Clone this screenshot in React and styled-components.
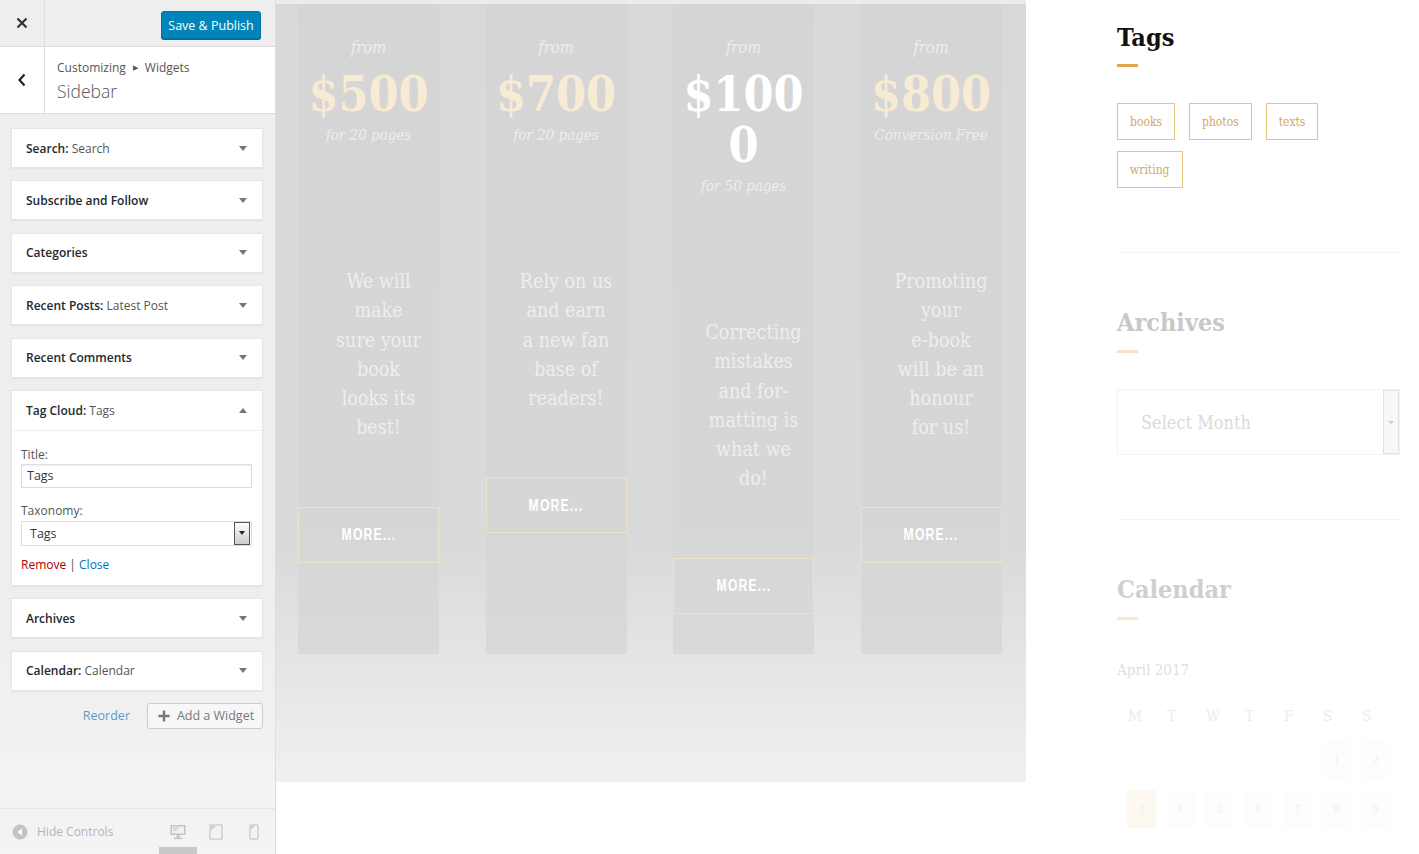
import React from 'react';
import styled, { createGlobalStyle } from 'styled-components';

const ADMIN = `"Open Sans", "Noto Sans", sans-serif`;
const SERIF = `"DejaVu Serif Condensed", "DejaVu Serif", serif`;
const CONDENSED = `"Liberation Sans", Arial, sans-serif`;

const GlobalStyle = createGlobalStyle`
  html, body {
    margin: 0;
    padding: 0;
    height: 100%;
    overflow: hidden;
    background: #fff;
  }
  #root {
    height: 100%;
  }
  * {
    box-sizing: border-box;
  }
`;

const Page = styled.div`
  display: flex;
  width: 1419px;
  height: 854px;
`;

// customizer panel on the left
const Controls = styled.div`
  width: 276px;
  flex-shrink: 0;
  display: flex;
  flex-direction: column;
  border-right: 1px solid #ddd;
  background: linear-gradient(#eee 0%, #eee 70%, #f4f4f4 100%);
  font-family: ${ADMIN};
`;

const TopBar = styled.div`
  height: 47px;
  display: flex;
  align-items: center;
  justify-content: space-between;
  border-bottom: 1px solid #ddd;
`;

const IconCell = styled.div`
  width: ${p => p.$w || 45}px;
  height: 100%;
  display: flex;
  align-items: center;
  justify-content: center;
  border-right: 1px solid #ddd;
  color: #444;
`;

const SaveButton = styled.button`
  margin: 4px 14px 0 0;
  width: 100px;
  height: 28px;
  padding: 0;
  background: #0085ba;
  border: 1px solid #0073aa;
  border-radius: 3px;
  box-shadow: 0 1px 0 #006799;
  color: #fff;
  font-family: ${ADMIN};
  font-size: 12.5px;
`;

const SectionHead = styled.div`
  height: 67px;
  display: flex;
  background: #fff;
  border-bottom: 1px solid #ddd;
`;

const HeadTitles = styled.div`
  display: flex;
  flex-direction: column;
  justify-content: center;
  padding: 4px 0 0 12px;
  color: #555;
`;

const Crumb = styled.div`
  font-size: 12px;
  line-height: 18px;
  display: flex;
  align-items: center;
  gap: 7px;
`;

const CrumbArrow = styled.span`
  font-size: 7px;
`;

const SectionTitle = styled.div`
  font-size: 17.5px;
  font-weight: 300;
  line-height: 28px;
  color: #555;
`;

const WidgetList = styled.div`
  display: flex;
  flex-direction: column;
  gap: 12.4px;
  padding: 14px 12px 0 11px;
`;

const Widget = styled.div`
  background: #fff;
  border: 1px solid #e5e5e5;
  box-shadow: 0 1px 1px rgba(0, 0, 0, 0.04);
`;

const WidgetHead = styled.div`
  height: ${p => (p.$open ? 40 : 38)}px;
  display: flex;
  align-items: center;
  justify-content: space-between;
  padding: 0 15px 0 14px;
  font-size: 12px;
  font-weight: 600;
  color: #23282d;
  border-bottom: ${p => (p.$open ? '1px solid #eee' : 'none')};
`;

const WidgetSub = styled.span`
  font-weight: 400;
  color: #555;
`;

const Caret = styled.span`
  width: 0;
  height: 0;
  border-left: 4px solid transparent;
  border-right: 4px solid transparent;
  ${p => (p.$up ? 'border-bottom: 5px solid #777;' : 'border-top: 5px solid #777;')}
`;

const WidgetBody = styled.div`
  padding: 15px 10px 11px 9px;
  display: flex;
  flex-direction: column;
`;

const FieldLabel = styled.div`
  font-size: 12px;
  line-height: 18px;
  color: #555;
  margin-top: ${p => p.$gap || 0}px;
`;

const TextField = styled.input`
  width: 100%;
  height: 24px;
  border: 1px solid #ddd;
  box-shadow: inset 0 1px 2px rgba(0, 0, 0, 0.07);
  padding: 0 5px;
  font-family: ${ADMIN};
  font-size: 12.5px;
  color: #32373c;
  outline: none;
`;

const SelectField = styled.div`
  margin-top: 1px;
  height: 25px;
  display: flex;
  align-items: center;
  justify-content: space-between;
  border: 1px solid #ddd;
  padding-left: 8px;
  font-size: 12.5px;
  color: #32373c;
`;

const ClassicArrow = styled.div`
  width: 16px;
  height: 23px;
  margin-right: 1px;
  border: 1px solid #555;
  background: linear-gradient(#fdfdfd, #ccc);
  display: flex;
  align-items: center;
  justify-content: center;
  &::after {
    content: '';
    border-left: 3px solid transparent;
    border-right: 3px solid transparent;
    border-top: 4px solid #222;
  }
`;

const LinkRow = styled.div`
  margin-top: 10px;
  font-size: 12px;
  line-height: 18px;
  color: #555;
`;

const TextLink = styled.span`
  color: ${p => p.$color || '#0073aa'};
  font-size: ${p => p.$size || 12}px;
`;

const Actions = styled.div`
  display: flex;
  justify-content: flex-end;
  align-items: center;
  gap: 17px;
  padding: 12px 12px 0 0;
`;

const AddWidget = styled.button`
  width: 116px;
  height: 26px;
  display: flex;
  align-items: center;
  justify-content: center;
  gap: 7px;
  padding: 0 0 0 2px;
  background: #f7f7f7;
  border: 1px solid #ccc;
  border-radius: 3px;
  color: #777;
  font-family: ${ADMIN};
  font-size: 12.5px;
`;

const Footer = styled.div`
  margin-top: auto;
  height: 46px;
  display: flex;
  align-items: center;
  border-top: 1px solid #e6e6e6;
  padding-left: 12px;
`;

const HideControls = styled.div`
  display: flex;
  align-items: center;
  gap: 9px;
  color: #b4b4b4;
  font-size: 12px;
`;

const Devices = styled.div`
  margin-left: auto;
  display: flex;
  height: 100%;
  padding-right: 2px;
`;

const DeviceBtn = styled.div`
  width: 38px;
  height: 100%;
  display: flex;
  align-items: center;
  justify-content: center;
  padding-top: 1px;
  box-shadow: ${p => (p.$active ? 'inset 0 -7px 0 #c9c9c9' : 'none')};
`;

// preview side
const Preview = styled.div`
  flex: 1;
  display: flex;
  background: #fff;
`;

const PricingWrap = styled.div`
  width: 750px;
  flex-shrink: 0;
  display: flex;
  flex-direction: column;
`;

const TopStrip = styled.div`
  height: 4px;
  background: #ececec;
`;

const Pricing = styled.div`
  height: 778px;
  display: flex;
  align-items: flex-start;
  gap: 46.5px;
  padding-left: 22px;
  background: linear-gradient(#d9d9d9 0%, #dadada 70%, #e6e6e6 86%, #f0f0f0 100%);
  font-family: ${SERIF};
`;

const PriceCol = styled.div`
  width: 141px;
  height: 650px;
  display: flex;
  flex-direction: column;
  align-items: center;
  padding-top: 34px;
  background: linear-gradient(#d5d5d5 0%, #d6d6d6 80%, #d9d9d9 100%);
`;

const FromText = styled.div`
  font-style: italic;
  font-size: ${p => p.$size || 15}px;
  line-height: 20px;
  color: #ededed;
  text-align: center;
  margin-top: ${p => p.$gap || 0}px;
`;

const Price = styled.div`
  margin-top: 11px;
  font-size: 48px;
  font-weight: 700;
  line-height: 51px;
  text-align: center;
  color: ${p => (p.$white ? '#fff' : '#f8ebd3')};
`;

const Desc = styled.div`
  width: 100%;
  margin-top: 122px;
  padding-left: 20px;
  font-size: 19.5px;
  line-height: 29.3px;
  color: #eeeeee;
  text-align: center;
  white-space: nowrap;
`;

const MoreButton = styled.div`
  margin-top: 64px;
  width: 141px;
  height: 56px;
  display: flex;
  align-items: center;
  justify-content: center;
  border: 1px solid #eee3c5;
  padding-top: 1px;
`;

// narrow display face: condensed by scaling the glyphs horizontally
const MoreLabel = styled.span`
  display: inline-block;
  color: #fff;
  font-family: ${CONDENSED};
  font-size: 16px;
  font-weight: 700;
  letter-spacing: 1.5px;
  transform: scaleX(0.76);
`;

const Sidebar = styled.div`
  width: 283px;
  margin-left: 91px;
  padding-top: 23px;
  font-family: ${SERIF};
`;

const WidgetTitle = styled.div`
  font-size: 25px;
  font-weight: 700;
  line-height: 30px;
  color: ${p => p.$color || '#111'};
  margin-top: ${p => p.$gap || 0}px;
`;

const Underline = styled.div`
  width: 21px;
  height: 3px;
  margin-top: ${p => p.$gap || 11}px;
  background: ${p => p.$color || '#e0a84e'};
`;

const TagList = styled.div`
  margin-top: 36px;
  display: flex;
  flex-wrap: wrap;
  gap: 11px 14px;
  width: 220px;
`;

const Tag = styled.div`
  height: 37px;
  display: flex;
  align-items: center;
  padding: 0 12px;
  border: 1px solid #e4c77c;
  color: #d2a85f;
  font-size: 12px;
`;

const Divider = styled.div`
  height: 1px;
  margin-top: ${p => p.$gap}px;
  background: #f4f4f4;
`;

const MonthSelect = styled.div`
  margin-top: 36px;
  height: 66px;
  display: flex;
  align-items: center;
  justify-content: space-between;
  border: 1px solid #f3f3f3;
  padding-left: 23px;
  font-size: 18px;
  color: #dadada;
`;

const SelectKnob = styled.div`
  width: 16px;
  height: 100%;
  border: 1px solid #e2e2e2;
  background: #f8f8f8;
  display: flex;
  align-items: center;
  justify-content: center;
  &::after {
    content: '';
    border-left: 3px solid transparent;
    border-right: 3px solid transparent;
    border-top: 3px solid #ccc;
  }
`;

const MonthLabel = styled.div`
  margin-top: 40px;
  font-size: 15px;
  line-height: 20px;
  color: #dedede;
`;

const CalGrid = styled.div`
  margin: 26px 0 0 5px;
  display: grid;
  grid-template-columns: repeat(7, 39px);
`;

const CalHead = styled.div`
  height: 20px;
  line-height: 20px;
  font-size: 15px;
  color: #ececec;
  padding-left: 6px;
`;

const CalDay = styled.div`
  height: 38px;
  margin: ${p => (p.$first ? '15px' : '11px')} 5px 0;
  display: flex;
  align-items: center;
  justify-content: center;
  font-size: 11px;
  color: #f0f0f0;
  background: ${p => (p.$today ? '#fdf8f0' : p.$filled ? '#fdfdfd' : 'transparent')};
`;

const columns = [
  { price: ['$500'], sub: 'for 20 pages', desc: ['We will', 'make', 'sure your', 'book', 'looks its', 'best!'] },
  { price: ['$700'], sub: 'for 20 pages', desc: ['Rely on us', 'and earn', 'a new fan', 'base of', 'readers!'] },
  { price: ['$100', '0'], sub: 'for 50 pages', white: true, desc: ['Correcting', 'mistakes', 'and for-', 'matting is', 'what we', 'do!'] },
  { price: ['$800'], sub: 'Conversion Free', desc: ['Promoting', 'your', 'e-book', 'will be an', 'honour', 'for us!'] },
];

const widgets = [
  { name: 'Search:', sub: 'Search' },
  { name: 'Subscribe and Follow' },
  { name: 'Categories' },
  { name: 'Recent Posts:', sub: 'Latest Post' },
  { name: 'Recent Comments' },
];

const CloseIcon = () => (
  <svg width="12" height="12" viewBox="0 0 12 12">
    <path d="M1.5 1.5 L10.5 10.5 M10.5 1.5 L1.5 10.5" stroke="#333" strokeWidth="2.2" />
  </svg>
);

const BackIcon = () => (
  <svg width="10" height="14" viewBox="0 0 10 14">
    <path d="M7.5 1.5 L2.5 7 L7.5 12.5" stroke="#222" strokeWidth="2.2" fill="none" />
  </svg>
);

const PlusIcon = () => (
  <svg width="12" height="12" viewBox="0 0 12 12">
    <path d="M6 0.5 V11.5 M0.5 6 H11.5" stroke="#777" strokeWidth="2.4" />
  </svg>
);

const HideIcon = () => (
  <svg width="16" height="16" viewBox="0 0 16 16">
    <circle cx="8" cy="8" r="7.5" fill="#c4c4c4" />
    <path d="M10 4.5 L5.5 8 L10 11.5 Z" fill="#fff" />
  </svg>
);

const DesktopIcon = () => (
  <svg width="16" height="16" viewBox="0 0 16 16">
    <rect x="0.5" y="1" width="15" height="10" fill="#c2c2c2" />
    <rect x="2" y="2.5" width="12" height="7" fill="#f2f2f2" />
    <path d="M3 4 H9 M3 6 H7" stroke="#c2c2c2" strokeWidth="1.2" />
    <rect x="6.5" y="11" width="3" height="2.5" fill="#c2c2c2" />
    <rect x="4" y="13.5" width="8" height="1.6" fill="#c2c2c2" />
  </svg>
);

const TabletIcon = () => (
  <svg width="14" height="16" viewBox="0 0 14 16">
    <rect x="1" y="1" width="12" height="14" fill="none" stroke="#cfcfcf" strokeWidth="1.5" />
    <path d="M2 2 H7 L2 7 Z" fill="#cfcfcf" />
  </svg>
);

const MobileIcon = () => (
  <svg width="10" height="16" viewBox="0 0 10 16">
    <rect x="1" y="1" width="8" height="14" rx="1" fill="none" stroke="#cfcfcf" strokeWidth="1.5" />
    <path d="M2 2 H6 L2 6 Z" fill="#cfcfcf" />
  </svg>
);

const weekdays = ['M', 'T', 'W', 'T', 'F', 'S', 'S'];
const firstWeek = [null, null, null, null, null, 1, 2];
const secondWeek = [3, 4, 5, 6, 7, 8, 9];

export default function App() {
  return (
    <Page>
      <GlobalStyle />
      <Controls>
        <TopBar>
          <IconCell $w={45}>
            <CloseIcon />
          </IconCell>
          <SaveButton>Save &amp; Publish</SaveButton>
        </TopBar>
        <SectionHead>
          <IconCell $w={45}>
            <BackIcon />
          </IconCell>
          <HeadTitles>
            <Crumb>
              Customizing <CrumbArrow>▶</CrumbArrow> Widgets
            </Crumb>
            <SectionTitle>Sidebar</SectionTitle>
          </HeadTitles>
        </SectionHead>

        <WidgetList>
          {widgets.map(w => (
            <Widget key={w.name}>
              <WidgetHead>
                <span>
                  {w.name} {w.sub && <WidgetSub>{w.sub}</WidgetSub>}
                </span>
                <Caret />
              </WidgetHead>
            </Widget>
          ))}
          <Widget>
            <WidgetHead $open>
              <span>
                Tag Cloud: <WidgetSub>Tags</WidgetSub>
              </span>
              <Caret $up />
            </WidgetHead>
            <WidgetBody>
              <FieldLabel>Title:</FieldLabel>
              <TextField defaultValue="Tags" />
              <FieldLabel $gap={14}>Taxonomy:</FieldLabel>
              <SelectField>
                Tags
                <ClassicArrow />
              </SelectField>
              <LinkRow>
                <TextLink $color="#a00">Remove</TextLink> | <TextLink>Close</TextLink>
              </LinkRow>
            </WidgetBody>
          </Widget>
          <Widget>
            <WidgetHead>
              <span>Archives</span>
              <Caret />
            </WidgetHead>
          </Widget>
          <Widget>
            <WidgetHead>
              <span>
                Calendar: <WidgetSub>Calendar</WidgetSub>
              </span>
              <Caret />
            </WidgetHead>
          </Widget>
        </WidgetList>

        <Actions>
          <TextLink $color="#5a9bc9" $size={12.5}>Reorder</TextLink>
          <AddWidget>
            <PlusIcon />
            Add a Widget
          </AddWidget>
        </Actions>

        <Footer>
          <HideControls>
            <HideIcon />
            Hide Controls
          </HideControls>
          <Devices>
            <DeviceBtn $active>
              <DesktopIcon />
            </DeviceBtn>
            <DeviceBtn>
              <TabletIcon />
            </DeviceBtn>
            <DeviceBtn>
              <MobileIcon />
            </DeviceBtn>
          </Devices>
        </Footer>
      </Controls>

      <Preview>
        <PricingWrap>
          <TopStrip />
          <Pricing>
            {columns.map((c, i) => (
              <PriceCol key={i}>
                <FromText $size={16.5}>from</FromText>
                <Price $white={c.white}>
                  {c.price.map((line, j) => (
                    <div key={j}>{line}</div>
                  ))}
                </Price>
                <FromText $gap={5}>{c.sub}</FromText>
                <Desc>
                  {c.desc.map((line, j) => (
                    <div key={j}>{line}</div>
                  ))}
                </Desc>
                <MoreButton>
                  <MoreLabel>MORE...</MoreLabel>
                </MoreButton>
              </PriceCol>
            ))}
          </Pricing>
        </PricingWrap>

        <Sidebar>
          <WidgetTitle>Tags</WidgetTitle>
          <Underline />
          <TagList>
            <Tag>books</Tag>
            <Tag>photos</Tag>
            <Tag>texts</Tag>
            <Tag>writing</Tag>
          </TagList>
          <Divider $gap={64} />

          <WidgetTitle $color="#c8c8c8" $gap={55}>Archives</WidgetTitle>
          <Underline $gap={12} $color="#f6e3c2" />
          <MonthSelect>
            Select Month
            <SelectKnob />
          </MonthSelect>
          <Divider $gap={64} />

          <WidgetTitle $color="#cfcfcf" $gap={55}>Calendar</WidgetTitle>
          <Underline $gap={12} $color="#f8e8cc" />
          <MonthLabel>April 2017</MonthLabel>
          <CalGrid>
            {weekdays.map((d, i) => (
              <CalHead key={i}>{d}</CalHead>
            ))}
            {firstWeek.map((d, i) =>
              d ? (
                <CalDay key={'a' + i} $first $filled>{d}</CalDay>
              ) : (
                <CalDay key={'a' + i} $first />
              )
            )}
            {secondWeek.map(d => (
              <CalDay key={'b' + d} $filled $today={d === 3}>{d}</CalDay>
            ))}
          </CalGrid>
        </Sidebar>
      </Preview>
    </Page>
  );
}
